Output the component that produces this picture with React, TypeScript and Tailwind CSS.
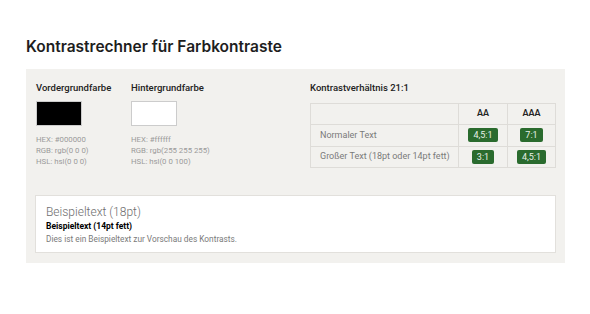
const font = { fontFamily: 'Roboto, "Liberation Sans", sans-serif' };

function Swatch({ label, color, hex, rgb, hsl }: { label: string; color: string; hex: string; rgb: string; hsl: string }) {
  return (
    <div className="w-[95px]">
      <h3 className="text-[9.5px] font-medium text-[#222] leading-[12px]">{label}</h3>
      <div className={`mt-[7px] w-[46px] h-[25px] border border-[#ccc] ${color}`}></div>
      <div className="mt-[8px] text-[7.8px] leading-[11px] text-[#9a9a9a]">
        <p>HEX: {hex}</p>
        <p>RGB: {rgb}</p>
        <p>HSL: {hsl}</p>
      </div>
    </div>
  );
}

function Badge({ children }: { children: React.ReactNode }) {
  return (
    <span className="inline-block bg-[#2a6b2e] text-[#e8f0e8] text-[9px] leading-[14px] px-[5px] rounded-[2px]">
      {children}
    </span>
  );
}

export default function App() {
  return (
    <div className="min-h-screen bg-white" style={font}>
      <div className="px-[26px] pt-[37px]">
        <h1 className="text-[15.5px] font-semibold text-[#1e1e1e] leading-[20px]" style={{ fontFamily: 'Inter, sans-serif' }}>
          Kontrastrechner für Farbkontraste
        </h1>

        <div className="mt-[12px] w-[539px] bg-[#f2f1ee] px-[9px] pt-[13px] pb-[10px]">
          <div className="flex">
            <div className="flex pl-[1px] w-[275px]">
              <Swatch label="Vordergrundfarbe" color="bg-black" hex="#000000" rgb="rgb(0 0 0)" hsl="hsl(0 0 0)" />
              <Swatch label="Hintergrundfarbe" color="bg-white" hex="#ffffff" rgb="rgb(255 255 255)" hsl="hsl(0 0 100)" />
            </div>
            <div className="w-[246px]">
              <h3 className="text-[9.5px] font-medium text-[#222] leading-[12px]">Kontrastverhältnis 21:1</h3>
              <table className="mt-[9px] w-full border-collapse text-[9px]">
                <thead>
                  <tr className="h-[21px]">
                    <th className="border border-[#dedcd8] w-[148px]"></th>
                    <th className="border border-[#dedcd8] w-[49px] font-semibold text-[#222]">AA</th>
                    <th className="border border-[#dedcd8] font-semibold text-[#222]">AAA</th>
                  </tr>
                </thead>
                <tbody>
                  <tr className="h-[22px]">
                    <td className="border border-[#dedcd8] pl-[9px] text-[#7a7a7a]">Normaler Text</td>
                    <td className="border border-[#dedcd8] text-center"><Badge>4,5:1</Badge></td>
                    <td className="border border-[#dedcd8] text-center"><Badge>7:1</Badge></td>
                  </tr>
                  <tr className="h-[21px]">
                    <td className="border border-[#dedcd8] pl-[9px] text-[#7a7a7a]">Großer Text (18pt oder 14pt fett)</td>
                    <td className="border border-[#dedcd8] text-center"><Badge>3:1</Badge></td>
                    <td className="border border-[#dedcd8] text-center"><Badge>4,5:1</Badge></td>
                  </tr>
                </tbody>
              </table>
            </div>
          </div>

          <div className="mt-[27px] bg-white border border-[#e2e0dc] px-[10px] pt-[8px] pb-[6px]">
            <p className="text-[12px] leading-[16px] text-[#6e6e6e] font-light">Beispieltext (18pt)</p>
            <p className="text-[8.5px] leading-[13px] font-bold text-black">Beispieltext (14pt fett)</p>
            <p className="text-[8.3px] leading-[13px] text-[#7a7a7a]">Dies ist ein Beispieltext zur Vorschau des Kontrasts.</p>
          </div>
        </div>
      </div>
    </div>
  );
}
